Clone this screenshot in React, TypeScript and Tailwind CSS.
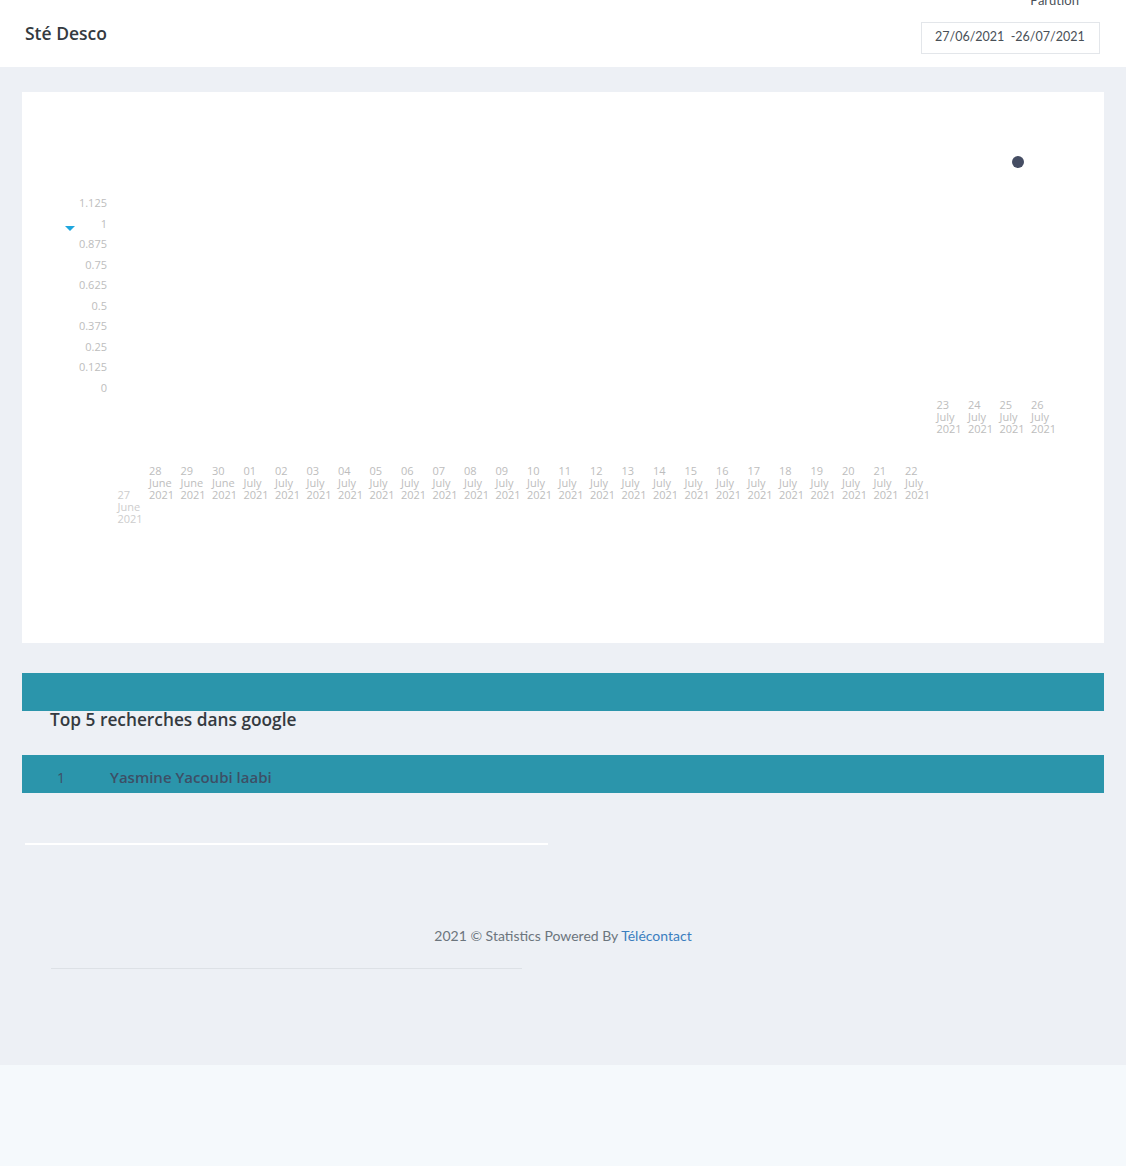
const yTicks = ['1.125', '1', '0.875', '0.75', '0.625', '0.5', '0.375', '0.25', '0.125', '0'];

const days = [
  ...['27', '28', '29', '30'].map((d) => [d, 'June']),
  ...Array.from({ length: 26 }, (_, i) => [String(i + 1).padStart(2, '0'), 'July']),
];

const ChartLabels = () => (
  <svg width="1082" height="551" className="block" style={{ fontFamily: '"Open Sans", sans-serif' }}>
    {yTicks.map((t, i) => (
      <text key={t} x="85" y={115 + i * 20.55} textAnchor="end" fontSize="11" fill="#bdbdbd">
        {t}
      </text>
    ))}
    <polygon points="43,134 53,134 48,139" fill="#1fa6de" />
    {days.map(([d, m], i) => {
      const x = 95.5 + i * 31.5;
      const top = i === 0 ? 407 : i >= 26 ? 317 : 383;
      return (
        <text key={`${d}-${m}`} x={x} fontSize="11" fill={i === 0 ? '#cdcdcd' : '#bdbdbd'}>
          <tspan x={x} y={top}>{d}</tspan>
          <tspan x={x} y={top + 12}>{m}</tspan>
          <tspan x={x} y={top + 24}>2021</tspan>
        </text>
      );
    })}
    <circle cx="996" cy="70" r="6" fill="#454d63" />
  </svg>
);

export default function App() {
  return (
    <div className="min-h-[1166px] bg-[#f5f9fc]" style={{ fontFamily: 'Lato, "Noto Sans", sans-serif' }}>
      <div className="bg-[#edf0f5]">
        {/* header */}
        <div className="relative flex h-[67px] items-center justify-between bg-white pl-[25px] pr-[26px]">
          <h1 className="font-['Open_Sans'] text-[17.5px] font-semibold text-[#343a40]">Sté Desco</h1>
          <span className="absolute right-[47px] top-[-9px] text-[13px] text-[#495057]">Parution</span>
          <div className="mt-[8px] flex h-[32px] w-[179px] items-center border border-[#e3e6ea] px-[13px] text-[12.5px] text-[#495057]">
            27/06/2021&nbsp;&nbsp;-26/07/2021
          </div>
        </div>

        <div className="px-[22px] pt-[25px]">
          <div className="h-[551px] bg-white">
            <ChartLabels />
          </div>

          <div className="mt-[30px] h-[38px] bg-[#2b95ab]" />
          <h2 className="pl-[28px] font-['Open_Sans'] text-[17.3px] font-semibold leading-[18px] text-[#343a40]">
            Top 5 recherches dans google
          </h2>

          <div className="mt-[26px] flex h-[38px] items-center bg-[#2b95ab] pt-[6px] font-['Open_Sans'] text-[15px] text-[#3d4f66]">
            <span className="w-[88px] pl-[35px] text-[14px]">1</span>
            <span className="font-semibold">Yasmine Yacoubi laabi</span>
          </div>

          <div className="ml-[3px] mt-[50px] h-[2px] w-[523px] bg-white" />
        </div>

        <footer className="pb-[96px] pt-[80px]">
          <p className="text-center text-[14px] text-[#6c757d]">
            2021 © Statistics Powered By <span className="text-[#3b7ebf]">Télécontact</span>
          </p>
          <div className="ml-[51px] mt-[22px] h-px w-[471px] bg-[#dde1e6]" />
        </footer>
      </div>
    </div>
  );
}
